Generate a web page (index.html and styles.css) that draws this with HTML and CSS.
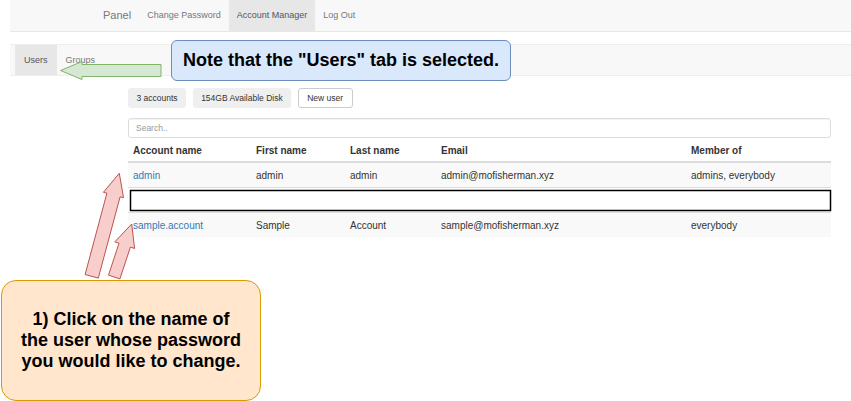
FILE: index.html
```html
<!DOCTYPE html>
<html lang="en">
<head>
    <meta charset="UTF-8">
    <title>Panel - Account Manager</title>
    <link rel="stylesheet" href="styles.css">
</head>
<body>
    <div class="page">
        <nav class="navbar">
            <span class="brand">Panel</span>
            <a class="nav-link" href="#">Change Password</a>
            <a class="nav-link active" href="#">Account Manager</a>
            <a class="nav-link" href="#">Log Out</a>
        </nav>

        <div class="tabbar">
            <a class="tab active" href="#">Users</a>
            <a class="tab" href="#">Groups</a>
        </div>

        <main class="content">
            <div class="toolbar">
                <span class="pill">3 accounts</span>
                <span class="pill">154GB Available Disk</span>
                <button class="btn">New user</button>
            </div>
            <input class="search" type="text" placeholder="Search..">

            <table class="users">
                <colgroup>
                    <col class="c-account">
                    <col class="c-first">
                    <col class="c-last">
                    <col class="c-email">
                    <col class="c-member">
                </colgroup>
                <thead>
                    <tr>
                        <th>Account name</th>
                        <th>First name</th>
                        <th>Last name</th>
                        <th>Email</th>
                        <th>Member of</th>
                    </tr>
                </thead>
                <tbody>
                    <tr>
                        <td><a href="#">admin</a></td>
                        <td>admin</td>
                        <td>admin</td>
                        <td>admin@mofisherman.xyz</td>
                        <td>admins, everybody</td>
                    </tr>
                    <tr class="blank">
                        <td></td><td></td><td></td><td></td><td></td>
                    </tr>
                    <tr>
                        <td><a href="#">sample.account</a></td>
                        <td>Sample</td>
                        <td>Account</td>
                        <td>sample@mofisherman.xyz</td>
                        <td>everybody</td>
                    </tr>
                </tbody>
            </table>
        </main>
    </div>

    <!-- annotation layer -->
    <svg class="marks" width="851" height="401" viewBox="0 0 851 401">
        <polygon class="arrow-green" points="60.5,70.5 82,61.5 82,64.5 161,64.5 161,76.5 82,76.5 82,79.5"/>
        <polygon class="arrow-red" points="119.3,173.3 123.5,197.7 120.1,196.8 98.3,278.1 85.1,274.5 106.9,193.2 103.4,192.3"/>
        <polygon class="arrow-red" points="131.7,224 134.6,248.5 130.4,247.1 119.9,278.9 108.5,275.1 119,243.3 114.8,241.9"/>
        <rect class="hide-row" x="130.5" y="190.5" width="700" height="20"/>
    </svg>

    <div class="note note-blue">Note that the "Users" tab is selected.</div>
    <div class="note note-orange">1) Click on the name of the user whose password you would like to change.</div>
</body>
</html>
```

FILE: styles.css
```css
body {
    margin: 0;
    font-family: "Liberation Sans", Arial, sans-serif;
    color: #333;
    background: #fff;
    position: relative;
    width: 851px;
    height: 401px;
    overflow: hidden;
}

.page {
    padding-left: 10px;
}

/* top navbar */
.navbar {
    display: flex;
    align-items: stretch;
    height: 31px;
    padding-left: 93px;
    background: #f8f8f8;
    border-bottom: 1px solid #e7e7e7;
}

.brand {
    font-size: 11px;
    line-height: 31px;
    color: #777;
    margin-right: 8px;
}

.nav-link {
    font-size: 9px;
    line-height: 31px;
    padding: 0 8px;
    color: #777;
    text-decoration: none;
}

.nav-link.active {
    background: #e7e7e7;
    color: #555;
}

/* users / groups tabs */
.tabbar {
    display: flex;
    margin-top: 12px;
    height: 30px;
    padding-left: 5px;
    background: #f8f8f8;
    border-top: 1px solid #eee;
    border-bottom: 1px solid #eee;
}

.tab {
    font-size: 9px;
    line-height: 30px;
    padding: 0 9px;
    color: #777;
    text-decoration: none;
}

.tab.active {
    background: #e7e7e7;
    color: #555;
}

/* main content */
.content {
    margin-left: 118px;
    width: 703px;
    padding-top: 12px;
}

.toolbar {
    display: flex;
    gap: 6.5px;
}

.pill,
.btn {
    font-family: inherit;
    font-size: 8.5px;
    height: 20px;
    line-height: 20px;
    padding: 0 8.5px;
    border-radius: 3px;
    color: #333;
    box-sizing: border-box;
}

.pill {
    background: #efefef;
}

.btn {
    background: #fff;
    border: 1px solid #ccc;
    line-height: 18px;
}

.search {
    display: block;
    margin-top: 10px;
    width: 100%;
    height: 20px;
    box-sizing: border-box;
    border: 1px solid #ddd;
    border-radius: 3px;
    padding: 0 7px;
    font-family: inherit;
    font-size: 8.5px;
    box-shadow: inset 0 1px 1px rgba(0, 0, 0, 0.05);
}

.search::placeholder {
    color: #999;
}

.users {
    margin-top: 2px;
    width: 100%;
    border-collapse: collapse;
    table-layout: fixed;
    font-size: 10px;
}

.c-account { width: 123px; }
.c-first { width: 94px; }
.c-last { width: 91px; }
.c-email { width: 250px; }

.users th {
    text-align: left;
    font-weight: bold;
    height: 21px;
    padding: 0 5px;
    border-bottom: 2px solid #ddd;
}

.users td {
    height: 24px;
    padding: 0 5px;
    border-top: 1px solid #ddd;
}

.users tbody tr:nth-child(odd) {
    background: #f9f9f9;
}

.users a {
    color: #337ab7;
    text-decoration: none;
}

/* annotation layer */
.marks {
    position: absolute;
    left: 0;
    top: 0;
    pointer-events: none;
}

.arrow-green {
    fill: #d5e8d4;
    stroke: #82b366;
    stroke-width: 1;
}

.arrow-red {
    fill: #f8cecc;
    stroke: #b85450;
    stroke-width: 1;
}

.hide-row {
    fill: #fff;
    stroke: #000;
    stroke-width: 1.5;
}

.note {
    position: absolute;
    box-sizing: border-box;
    display: flex;
    align-items: center;
    justify-content: center;
    text-align: center;
    font-weight: bold;
    font-size: 18px;
    color: #000;
}

.note-blue {
    left: 171px;
    top: 40px;
    width: 340px;
    height: 41px;
    background: #dae8fc;
    border: 1px solid #6c8ebf;
    border-radius: 6px;
}

.note-orange {
    left: 1px;
    top: 280px;
    width: 260px;
    height: 121px;
    padding: 0 18px;
    line-height: 21px;
    background: #ffe6cc;
    border: 1px solid #d79b00;
    border-radius: 15px;
}
```
